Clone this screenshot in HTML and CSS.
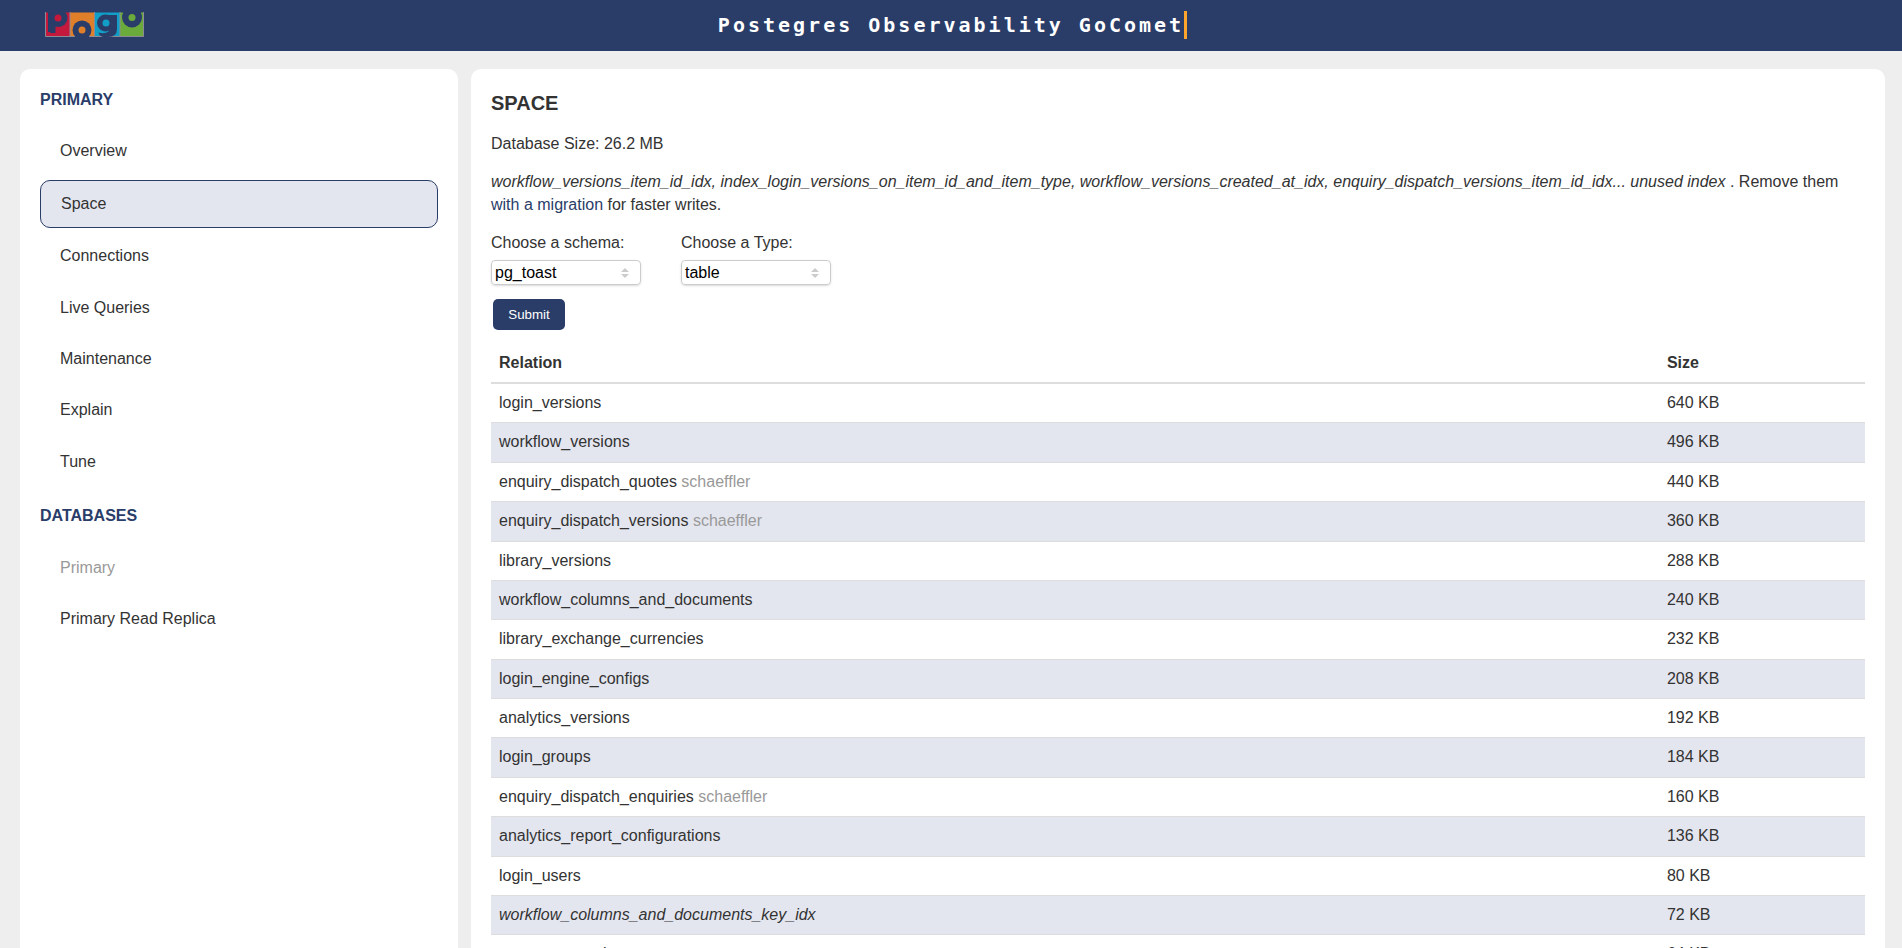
FILE: index.html
```
<!DOCTYPE html>
<html lang="en">
<head>
<meta charset="utf-8">
<title>Postegres Observability GoComet</title>
<link rel="stylesheet" href="styles.css">
</head>
<body>
<header class="topbar">
  <svg class="logo" viewBox="0 0 99 25" role="img" aria-label="pogo">
    <rect x="0.5" y="0.5" width="24.5" height="24" fill="#c4183c"/>
    <rect x="25" y="0.5" width="24.500" height="24" fill="#e07f2a"/>
    <rect x="49.5" y="0.5" width="25.5" height="24" fill="#119fc8"/>
    <rect x="75" y="0.5" width="23.500" height="24" fill="#6bab3b"/>
    <path d="M0.5 0V24.500H98.500V0M25 0V24.500M49.500 0V24.500M75 0V24.500" class="logo-frame"/>
    <g class="logo-ink">
      <path d="M3 0H12V14L10.500 15V21H5V20H3Z"/>
      <circle cx="13.500" cy="6" r="9"/>
      <circle cx="37" cy="18" r="9.500"/>
      <rect x="30" y="24" width="14" height="1"/>
      <circle cx="60.500" cy="11" r="8.500"/>
      <path d="M64 3H72V17Q72 25 63 25H58Q54 24 53.500 20.500Q60 22.500 64 19Z"/>
      <circle cx="87" cy="5.500" r="10"/>
      <rect x="78" y="0" width="18" height="5"/>
    </g>
    <circle cx="13" cy="6" r="3.500" fill="#c4183c"/>
    <circle cx="37" cy="18" r="3.500" fill="#e07f2a"/>
    <circle cx="61" cy="11" r="3.500" fill="#119fc8"/>
    <circle cx="87" cy="5.500" r="3.500" fill="#6bab3b"/>
  </svg>
  <div class="title">Postegres Observability GoComet</div>
</header>
<div class="layout">
  <aside class="sidebar">
    <h3>PRIMARY</h3>
    <nav>
      <a>Overview</a>
      <a class="active">Space</a>
      <a>Connections</a>
      <a>Live Queries</a>
      <a>Maintenance</a>
      <a>Explain</a>
      <a>Tune</a>
    </nav>
    <h3>DATABASES</h3>
    <nav>
      <a class="muted">Primary</a>
      <a>Primary Read Replica</a>
    </nav>
  </aside>
  <main class="content">
    <h1>SPACE</h1>
    <p>Database Size: 26.2 MB</p>
    <p><em>workflow_versions_item_id_idx, index_login_versions_on_item_id_and_item_type, workflow_versions_created_at_idx, enquiry_dispatch_versions_item_id_idx... unused index</em> . Remove them <a class="link">with a migration</a> for faster writes.</p>
    <div class="filters">
      <div class="field">
        <span>Choose a schema:</span>
        <div class="select">pg_toast<svg width="8" height="10" viewBox="0 0 8 10"><path d="M4 0L8 4H0ZM0 6H8L4 10Z"/></svg></div>
      </div>
      <div class="field">
        <span>Choose a Type:</span>
        <div class="select">table<svg width="8" height="10" viewBox="0 0 8 10"><path d="M4 0L8 4H0ZM0 6H8L4 10Z"/></svg></div>
      </div>
    </div>
    <button class="submit">Submit</button>
    <table>
      <thead><tr><th>Relation</th><th class="size">Size</th></tr></thead>
      <tbody>
        <tr><td>login_versions</td><td>640 KB</td></tr>
        <tr><td>workflow_versions</td><td>496 KB</td></tr>
        <tr><td>enquiry_dispatch_quotes <span class="muted">schaeffler</span></td><td>440 KB</td></tr>
        <tr><td>enquiry_dispatch_versions <span class="muted">schaeffler</span></td><td>360 KB</td></tr>
        <tr><td>library_versions</td><td>288 KB</td></tr>
        <tr><td>workflow_columns_and_documents</td><td>240 KB</td></tr>
        <tr><td>library_exchange_currencies</td><td>232 KB</td></tr>
        <tr><td>login_engine_configs</td><td>208 KB</td></tr>
        <tr><td>analytics_versions</td><td>192 KB</td></tr>
        <tr><td>login_groups</td><td>184 KB</td></tr>
        <tr><td>enquiry_dispatch_enquiries <span class="muted">schaeffler</span></td><td>160 KB</td></tr>
        <tr><td>analytics_report_configurations</td><td>136 KB</td></tr>
        <tr><td>login_users</td><td>80 KB</td></tr>
        <tr><td><em>workflow_columns_and_documents_key_idx</em></td><td>72 KB</td></tr>
        <tr><td>company_versions</td><td>64 KB</td></tr>
      </tbody>
    </table>
  </main>
</div>
</body>
</html>
```
FILE: styles.css
```
* { box-sizing: border-box; }
body {
  margin: 0;
  height: 948px;
  overflow: hidden;
  background: #eee;
  color: #333;
  font: 16px/1.4 "Liberation Sans", Arial, sans-serif;
}
.topbar {
  height: 51px;
  background: #2a3d69;
  display: grid;
  grid-template-columns: 1fr auto 1fr;
  align-items: center;
}
.logo { width: 99px; height: 25px; margin: 0 0 3px 45px; display: block; }
.logo-ink { fill: #2a3d69; }
.logo-frame { fill: none; stroke: #8b8b98; stroke-width: 1; }
.title {
  color: #fff;
  font: bold 20px/28px "DejaVu Sans Mono", monospace;
  letter-spacing: 3px;
  border-right: 3px solid #ffa42c;
  white-space: nowrap;
  margin: 0 -1.500px 1px 1.500px;
}
.layout {
  display: grid;
  grid-template-columns: 438px 1414px;
  column-gap: 13px;
  padding: 18px 0 0 20px;
}
.sidebar, .content {
  background: #fff;
  border-radius: 10px;
  min-height: 900px;
  padding: 20px;
}
h3 { margin: 0 0 17px; font-size: 16px; color: #2a3d69; }
nav { display: flex; flex-direction: column; gap: 5px; }
nav + h3 { margin: 19.600px 0 17.600px; }
nav a { padding: 12px 20px; border-radius: 10px; }
nav .active { background: #e4e6ef; border: 1px solid #2a3d69; }
.muted { color: #999; }
h1 { margin: 0 0 16px; font-size: 20px; line-height: 28px; }
p { margin: 0 0 16px; }
.link { color: #2a3d69; }
.filters { display: flex; gap: 40px; }
.field { width: 150px; display: flex; flex-direction: column; gap: 5.400px; }
.select {
  height: 25px;
  display: flex;
  align-items: center;
  justify-content: space-between;
  padding: 1px 11px 0 3px;
  border: 1px solid #ccc;
  border-radius: 4px;
  box-shadow: 0 1px 3px -1px rgba(0, 0, 0, .3);
  color: #000;
}
.select svg { fill: #ccc; }
.submit {
  display: block;
  width: 72px;
  height: 31px;
  margin: 14px 0 13.600px 2px;
  border: 0;
  border-radius: 5px;
  background: #2a3d69;
  color: #fff;
  font: 13.333px "Liberation Sans", Arial, sans-serif;
}
table { width: 100%; border-collapse: separate; border-spacing: 0; table-layout: fixed; }
th, td { padding: 8px; text-align: left; }
th { border-bottom: 2px solid #ddd; }
.size { width: 15%; }
tbody tr + tr td { border-top: 1px solid #ddd; }
tbody tr:nth-child(even) td { background: #e4e6ef; }
```
